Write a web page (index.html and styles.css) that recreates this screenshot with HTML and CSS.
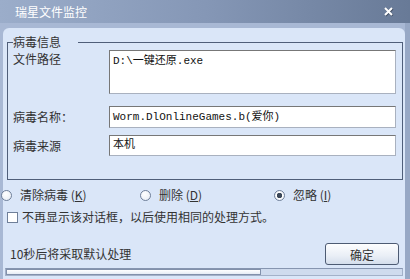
FILE: index.html
```html
<!DOCTYPE html>
<html lang="zh-CN">
<head>
    <meta charset="UTF-8">
    <title>瑞星文件监控</title>
    <link rel="stylesheet" href="styles.css">
</head>
<body>
    <div class="window">
        <div class="titlebar">
            <span class="title">瑞星文件监控</span>
            <svg class="close" width="11" height="11" viewBox="0 0 11 11">
                <path d="M2 2 L9 9 M9 2 L2 9" stroke="#3e4b60" stroke-width="2.4" transform="translate(0.6 0.6)"/>
                <path d="M2 2 L9 9 M9 2 L2 9" stroke="#fff" stroke-width="2"/>
            </svg>
        </div>
        <div class="frame">
            <div class="panel">
                <fieldset class="group">
                    <legend>病毒信息</legend>
                    <div class="field-row">
                        <span class="field-label top">文件路径</span>
                        <div class="textbox tall">D:\一键还原.exe</div>
                    </div>
                    <div class="field-row second">
                        <span class="field-label">病毒名称：</span>
                        <div class="textbox">Worm.DlOnlineGames.b(爱你)</div>
                    </div>
                    <div class="field-row third">
                        <span class="field-label">病毒来源</span>
                        <div class="textbox short">本机</div>
                    </div>
                </fieldset>

                <div class="options">
                    <label class="radio first"><span class="dot"></span>清除病毒 (<u>K</u>)</label>
                    <label class="radio second"><span class="dot"></span>删除 (<u>D</u>)</label>
                    <label class="radio"><span class="dot checked"></span>忽略 (<u>I</u>)</label>
                </div>

                <label class="check"><span class="box"></span>不再显示该对话框，以后使用相同的处理方式。</label>

                <div class="footer">
                    <span class="countdown">10秒后将采取默认处理</span>
                    <button class="ok">确定</button>
                </div>

                <div class="progress">
                    <div class="progress-fill" style="width: 255px"></div>
                </div>
            </div>
        </div>
    </div>
</body>
</html>
```

FILE: styles.css
```css
body {
    margin: 0;
    font-family: "Noto Sans CJK SC", "DejaVu Sans", sans-serif;
    font-size: 12px;
    color: #333;
    background: #a8b8d4;
}
.window {
    width: 410px;
    height: 279px;
    overflow: hidden;
    display: flex;
    flex-direction: column;
}
.titlebar {
    height: 23px;
    flex: none;
    display: flex;
    align-items: center;
    justify-content: space-between;
    padding: 0 16px 0 15px;
    background: linear-gradient(90deg, #9badca, #8597b6 50%, #687a97);
    color: #fff;
}
.title {
    line-height: 14px;
}
.close {
    display: block;
}
.frame {
    flex: 1;
    padding: 5px 5px 0 3px;
    background: linear-gradient(90deg, #a8b8d4 calc(100% - 5px), #97a8c5 0);
}
.panel {
    height: 100%;
    box-sizing: border-box;
    background: #dae6f8;
    border-radius: 6px 6px 0 0;
    padding: 7px 2px 0 4px;
}

/* group box */
.group {
    margin: 0;
    min-width: 0;
    border: 1px solid #4f5e79;
    padding: 1px 6px 23px 5px;
}
.group legend {
    padding: 0 17px 0 0;
    line-height: 14px;
}
.field-row {
    display: grid;
    grid-template-columns: 96px 1fr;
}
.field-row.second {
    margin-top: 12px;
}
.field-row.third {
    margin-top: 7px;
}
.field-label {
    line-height: 14px;
    align-self: center;
}
.field-label.top {
    align-self: start;
    margin-top: 2px;
}
.textbox {
    box-sizing: border-box;
    height: 22px;
    padding: 2px 3px;
    background: #fff;
    border: 1px solid;
    border-color: #777 #a9b1bf #a9b1bf #777;
    font-family: "Liberation Mono", "Noto Sans CJK SC", monospace;
    font-size: 11px;
    line-height: 16px;
    color: #111;
}
.textbox.tall {
    height: 44px;
}
.textbox.short {
    height: 21px;
    padding-top: 1px;
}

/* radios and checkbox */
.options {
    display: flex;
    align-items: center;
    margin: 8px 0 0 -6px;
    line-height: 14px;
}
.radio {
    display: flex;
    align-items: center;
}
.radio.first {
    width: 139px;
}
.radio.second {
    width: 134px;
}
.dot {
    width: 11px;
    height: 11px;
    box-sizing: border-box;
    border: 1px solid #6f7f99;
    border-radius: 50%;
    margin-right: 8px;
    background: radial-gradient(circle at 40% 35%, #fff, #e4eaf3);
}
.dot.checked {
    background: radial-gradient(circle, #3c4859 0 2.5px, #fff 3px, #e4eaf3);
}
u {
    text-underline-offset: 1px;
}
.check {
    display: flex;
    align-items: center;
    margin-top: 8px;
    line-height: 14px;
}
.box {
    width: 11px;
    height: 11px;
    box-sizing: border-box;
    border: 1px solid #6f7f99;
    background: #fff;
    margin-right: 4px;
}

/* footer */
.footer {
    display: flex;
    align-items: center;
    justify-content: space-between;
    margin-top: 19px;
    padding: 0 4px 0 3px;
}
.countdown {
    line-height: 14px;
}
.ok {
    width: 74px;
    height: 22px;
    padding: 0;
    border: 1px solid #4d5b73;
    border-radius: 3px;
    background: linear-gradient(#fdfeff, #e9eef6 60%, #d4deec);
    font-family: inherit;
    font-size: 12px;
    color: #333;
}
.progress {
    height: 8px;
    box-sizing: border-box;
    margin: 3px 0 0 -2px;
    border: 1px solid #a3b1c9;
    border-top-color: #8695b0;
    background: #cfdbee;
}
.progress-fill {
    height: 100%;
    box-sizing: border-box;
    border: 1px solid #8291ab;
    background: linear-gradient(#ffffff, #e6ecf5);
}
```
